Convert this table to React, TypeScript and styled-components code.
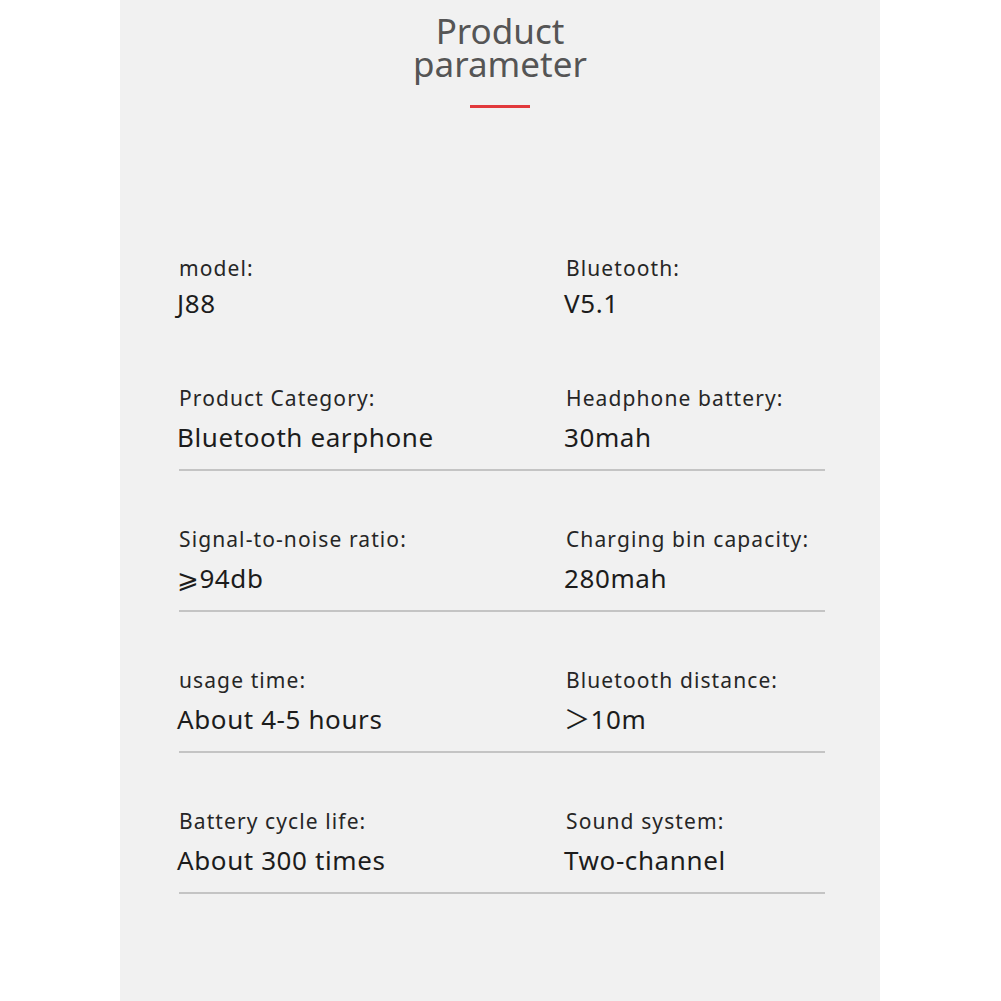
import styled, { createGlobalStyle } from "styled-components";

interface Param {
  label: string;
  value: string;
}

const rows: Param[][] = [
  [
    { label: "model:", value: "J88" },
    { label: "Bluetooth:", value: "V5.1" },
  ],
  [
    { label: "Product Category:", value: "Bluetooth earphone" },
    { label: "Headphone battery:", value: "30mah" },
  ],
  [
    { label: "Signal-to-noise ratio:", value: "⩾94db" },
    { label: "Charging bin capacity:", value: "280mah" },
  ],
  [
    { label: "usage time:", value: "About 4-5 hours" },
    { label: "Bluetooth distance:", value: "＞10m" },
  ],
  [
    { label: "Battery cycle life:", value: "About 300 times" },
    { label: "Sound system:", value: "Two-channel" },
  ],
];

const GlobalStyle = createGlobalStyle`
  body {
    margin: 0;
    background: #ffffff;
    font-family: "Noto Sans", "Noto Sans CJK SC", "DejaVu Sans", sans-serif;
  }
`;

export default function App() {
  return (
    <>
      <GlobalStyle />
      <Panel>
        <Title>
          <TitleLine>Product</TitleLine>
          <TitleLine>parameter</TitleLine>
        </Title>
        <Accent />
        <Table>
          {rows.map((row, i) => (
            <Row key={i} $divider={i > 0}>
              {row.map((p) => (
                <Cell key={p.label} $tight={i === 0}>
                  <Label>{p.label}</Label>
                  <Value>{p.value}</Value>
                </Cell>
              ))}
            </Row>
          ))}
        </Table>
      </Panel>
    </>
  );
}

const Panel = styled.div`
  width: 760px;
  height: 1001px;
  margin-left: 120px;
  background: #f1f1f1;
  display: flex;
  flex-direction: column;
  align-items: center;
  padding-top: 14px;
  box-sizing: border-box;
`;

const Title = styled.h1`
  margin: 0;
  font-size: 35px;
  font-weight: 400;
  color: #555555;
  text-align: center;
`;

const TitleLine = styled.span`
  display: block;
  line-height: 33px;
`;

const Accent = styled.div`
  width: 60px;
  height: 3px;
  margin-top: 25px;
  background: #e2393c;
`;

const Table = styled.div`
  width: 646px;
  margin-top: 148px;
  margin-left: 4px;
  display: flex;
  flex-direction: column;
  gap: 56px;
`;

const Row = styled.div<{ $divider: boolean }>`
  display: grid;
  grid-template-columns: 387px 1fr;
  padding-bottom: ${(p) => (p.$divider ? "17px" : "12px")};
  border-bottom: ${(p) => (p.$divider ? "2px solid #c4c4c4" : "none")};
`;

const Cell = styled.div<{ $tight: boolean }>`
  display: flex;
  flex-direction: column;
  gap: ${(p) => (p.$tight ? "8px" : "12px")};
`;

const Label = styled.div`
  font-size: 21px;
  line-height: 24px;
  letter-spacing: 1.1px;
  color: #262626;
  white-space: nowrap;
`;

const Value = styled.div`
  font-size: 26px;
  line-height: 30px;
  letter-spacing: 0.6px;
  color: #1c1c1c;
  white-space: nowrap;
  margin-left: -2px;
`;
